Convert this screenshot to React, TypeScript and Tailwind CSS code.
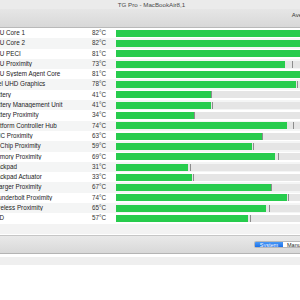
const sensors: [string, number, number | null][] = [
  ['CPU Core 1', 82, null],
  ['CPU Core 2', 82, null],
  ['CPU PECI', 81, null],
  ['CPU Proximity', 73, 76],
  ['CPU System Agent Core', 81, null],
  ['Intel UHD Graphics', 78, 78.3],
  ['Battery', 41, 41.3],
  ['Battery Management Unit', 41, 41.5],
  ['Battery Proximity', 34, 33.8],
  ['Platform Controller Hub', 74, 76.8],
  ['SMC Proximity', 63, 63.4],
  ['T2 Chip Proximity', 59, 59.4],
  ['Memory Proximity', 69, 70],
  ['Trackpad', 31, 31.9],
  ['Trackpad Actuator', 33, 33.3],
  ['Charger Proximity', 67, 67.2],
  ['Thunderbolt Proximity', 74, 74.3],
  ['Wireless Proximity', 65, 66.2],
  ['SSD', 57, 57.9],
];

const SCALE = 2.31;

function SensorRow({ name, temp, max, odd }: { name: string; temp: number; max: number | null; odd: boolean }) {
  return (
    <div className={`flex items-center h-[10.3px] ${odd ? 'bg-[#f4f5f5]' : 'bg-white'}`}>
      <div className="ml-[-9px] w-[94px] shrink-0 truncate text-[6.3px] leading-none text-[#222]">{name}</div>
      <div className="w-[21px] shrink-0 text-right text-[6.3px] leading-none text-[#333]">{temp}°C</div>
      <div className="ml-[10px] relative h-[7px] w-[200px] shrink-0 bg-[#e5e5e5]">
        <div className="h-full bg-[#27cc4d]" style={{ width: `${temp * SCALE}px` }} />
        {max !== null && (
          <div className="absolute top-0 h-full w-px bg-[#8c8c8c]" style={{ left: `${max * SCALE}px` }} />
        )}
      </div>
    </div>
  );
}

export default function App() {
  return (
    <div className="w-[300px] h-[300px] overflow-hidden bg-white flex flex-col" style={{ fontFamily: '"Liberation Sans", Arial, sans-serif' }}>
      <div className="h-[9px] shrink-0 bg-[#ebebeb] flex items-center justify-center text-[6.2px] text-[#4a4a4a] pl-[3px]">
        TG Pro - MacBookAir8,1
      </div>
      <div className="h-[19px] shrink-0 bg-gradient-to-b from-[#e6e6e6] to-[#d8d8d8] border-b border-[#b9b9b9] flex items-start justify-end pt-[2px]">
        <span className="mr-[-14px] text-[6px] text-[#333]">Average</span>
      </div>
      <div className="flex flex-col overflow-hidden">
        {sensors.map(([name, temp, max], i) => (
          <SensorRow key={name} name={name} temp={temp} max={max} odd={i % 2 === 1} />
        ))}
        <div className="h-[10px] bg-[#f3f3f3]" />
      </div>
      <div className="h-[1.5px] shrink-0 bg-white" />
      <div className="h-[19px] shrink-0 bg-gradient-to-b from-[#e9e9e9] to-[#d8d8d8] border-t border-b border-t-[#c6c6c6] border-b-[#b4b4b4] flex items-center justify-end">
        <div className="flex h-[7px] mr-[-20px] rounded-[1.5px] overflow-hidden border border-[#b8b8b8]">
          <div className="w-[28px] bg-gradient-to-b from-[#4a9af7] to-[#1a6fe9] text-white text-[5.5px] leading-[6px] text-center">System</div>
          <div className="w-[36px] bg-white text-[#222] text-[5.5px] leading-[6px] pl-[4px]">Manual</div>
        </div>
      </div>
      <div className="h-[3px] shrink-0 bg-white" />
      <div className="h-[8px] shrink-0 bg-[#efefef]" />
      <div className="flex-1 bg-white" />
    </div>
  );
}
